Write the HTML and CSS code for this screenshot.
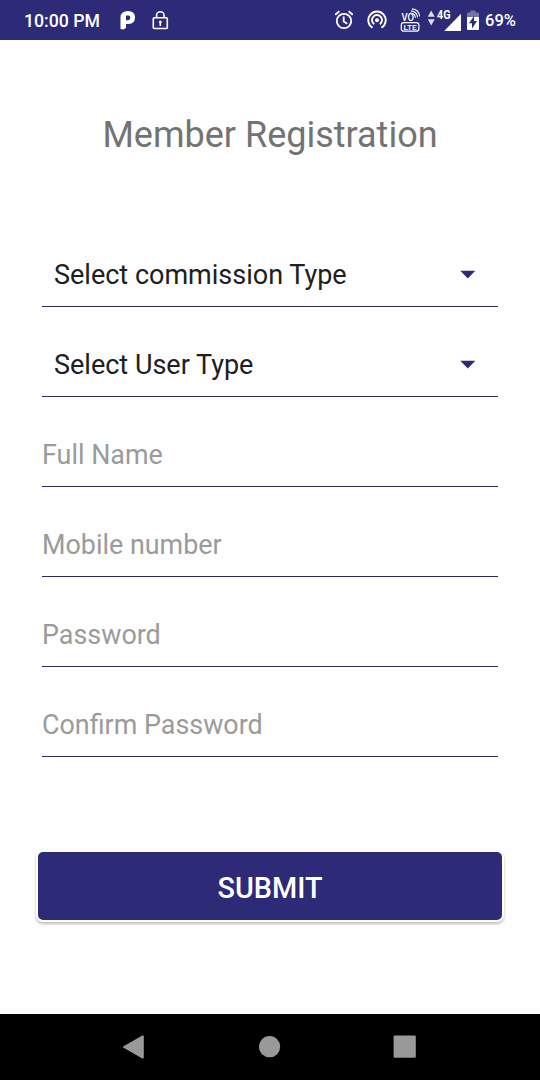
FILE: index.html
```html
<!DOCTYPE html>
<html lang="en">
<head>
<meta charset="utf-8">
<title>Member Registration</title>
<link rel="stylesheet" href="styles.css">
</head>
<body>
<div class="screen">
  <header class="status-bar">
    <span class="clock">10:00 PM</span>
    <svg class="app-icon" width="16" height="20" viewBox="0 0 16 20"><path fill="#fff" fill-rule="evenodd" d="M.5 19V7.500Q.5 1 8 1q7 0 7 6.500 0 6.500-6.500 6.500H6v3.700L3.700 19.500ZM6 5.500v4.700h2.200q2.100 0 2.100-2.400T8.200 5.500Z"/></svg>
    <svg class="lock-icon" width="17" height="20" viewBox="0 0 17 20" fill="none" stroke="#fff" stroke-width="1.600"><rect x="1.300" y="7.800" width="14" height="10.700" rx="1"/><path d="M4.600 7.500V5a3.700 3.200 0 0 1 7.400 0v2.500M8.300 12v4"/><circle cx="8.300" cy="12" r="1" fill="#fff" stroke-width="1"/></svg>
    <span class="spacer"></span>
    <svg class="alarm" width="20" height="20" viewBox="0 0 20 20" fill="none" stroke="#fff" stroke-width="1.800"><circle cx="10" cy="11" r="7.200"/><path d="M1.200 4.700 5.400 1.200M14.600 1.200l4.200 3.500M9.700 6.500v5l3.600 2.200"/></svg>
    <svg class="hotspot" width="20" height="20" viewBox="0 0 20 20" fill="none" stroke="#fff" stroke-width="1.900"><path d="M5.500 17.600a8.700 8.700 0 1 1 9 0M7.200 14.200a5 5 0 1 1 5.600 0"/><circle cx="10" cy="10.300" r="2" fill="#fff" stroke="none"/></svg>
    <svg class="volte" width="21" height="25" viewBox="0 0 21 25"><text x="1.500" y="13.200" font-size="10" textLength="12.500" lengthAdjust="spacingAndGlyphs">VO</text><rect x="1.300" y="14.600" width="17.600" height="8.600" rx="2.500" fill="none" stroke="#fff" stroke-width="1.200"/><text x="3.600" y="22" font-size="8" textLength="13.200" lengthAdjust="spacingAndGlyphs">LTE</text><path d="M10.500 5q4.600.2 4.900 4.800M11 2.900q6 .5 6.600 6.600M12 .9q7 .5 7.500 7.500" fill="none" stroke="#fff" stroke-width="1.100"/></svg>
    <svg class="signal" width="35" height="24" viewBox="0 0 35 24" fill="#fff"><path opacity=".85" d="m.8 8.700 3.400-6.200 3.500 6.200ZM.8 11.200h6.900l-3.500 6.200Z"/><text x="10" y="10.700" font-size="12" textLength="13.500" lengthAdjust="spacingAndGlyphs">4G</text><path d="M34 5.700V23H17.200Z"/></svg>
    <svg class="battery" width="12" height="21" viewBox="0 0 12 21"><path fill="#77749f" d="M1 2.500h2.500v-2h5v2H11q1 0 1 1V7H0V3.500q0-1 1-1Z"/><path fill="#fff" d="M0 7h12v12q0 1-1 1H1q-1 0-1-1Z"/><path fill="#2d2b77" d="M7 6v5h3l-5 7.500v-5.300H2Z"/></svg>
    <span class="charge">69%</span>
  </header>

  <main class="content">
    <h1 class="title">Member Registration</h1>
    <form class="form">
      <div class="field select"><span>Select commission Type</span><svg width="16" height="9" viewBox="0 0 16 9"><path fill="#2d2b77" d="M.3.800h15L7.800 8.400Z"/></svg></div>
      <div class="field select"><span>Select User Type</span><svg width="16" height="9" viewBox="0 0 16 9"><path fill="#2d2b77" d="M.3.800h15L7.800 8.400Z"/></svg></div>
      <div class="field">Full Name</div>
      <div class="field">Mobile number</div>
      <div class="field">Password</div>
      <div class="field">Confirm Password</div>
      <button class="submit" type="button">SUBMIT</button>
    </form>
  </main>

  <nav class="nav-bar">
    <svg width="24" height="26" viewBox="0 0 24 26"><path fill="#999" stroke="#999" stroke-width="2" stroke-linejoin="round" d="M3 13 21.800 2.400v21.200Z"/></svg>
    <svg width="24" height="26" viewBox="0 0 24 26"><circle cx="12.600" cy="12.700" r="10.600" fill="#999"/></svg>
    <svg width="24" height="26" viewBox="0 0 24 26"><rect x=".6" y="1.500" width="22.200" height="22.200" rx="1.200" fill="#999"/></svg>
  </nav>
</div>
</body>
</html>
```
FILE: styles.css
```css
* { box-sizing: border-box; }
body { margin: 0; background: #fefefe; font-family: Roboto, "Liberation Sans", sans-serif; }
.screen { width: 540px; height: 1080px; display: flex; flex-direction: column; overflow: hidden; }

.status-bar { height: 40px; flex: none; padding: 0 24px; display: flex; align-items: center; background: #2d2b77; color: #fff; font-size: 18px; font-weight: 500; }
.status-bar svg { flex: none; }
.clock { width: 76px; padding-top: 2px; font-size: 17.700px; white-space: nowrap; }
.app-icon { margin-left: 19.500px; }
.lock-icon { margin-left: 16px; }
.spacer { flex: 1; }
.alarm { margin-right: 13px; }
.hotspot { margin-right: 13px; }
.volte { margin-right: 6px; fill: #fff; font-weight: 500; }
.signal { margin: 0 5px 0 0; font-weight: 700; }
.battery { margin-right: 6px; }
.charge { width: 31px; padding-top: 1px; font-size: 16.500px; white-space: nowrap; }

.content { flex: 1; padding: 74px 36px 0; }
.title { margin: 0; height: 42px; line-height: 42px; text-align: center; font-size: 36px; font-weight: 400; color: #737373; white-space: nowrap; }
.form { padding-top: 61px; }
.field { height: 90px; margin: 0 6px; padding-top: 26px; display: flex; align-items: center; border-bottom: 1px solid #2c2b58; color: #9b9b9b; font-size: 26.900px; line-height: 32px; white-space: nowrap; }
.select { padding-left: 12px; padding-right: 22px; justify-content: space-between; color: #202020; font-size: 27px; }
.submit { display: block; width: 468px; height: 72px; margin: 93px 0 0; padding: 4px 0 0; border: 2px solid #fff; border-radius: 7px; background: #2d2b77; color: #fff; font: 500 28.800px/64px Roboto, "Liberation Sans", sans-serif; box-shadow: 0 2px 3px rgba(0, 0, 0, .25); }

.nav-bar { height: 66px; flex: none; padding: 0 123px 0 121px; display: flex; align-items: center; justify-content: space-between; background: #000; }
```
